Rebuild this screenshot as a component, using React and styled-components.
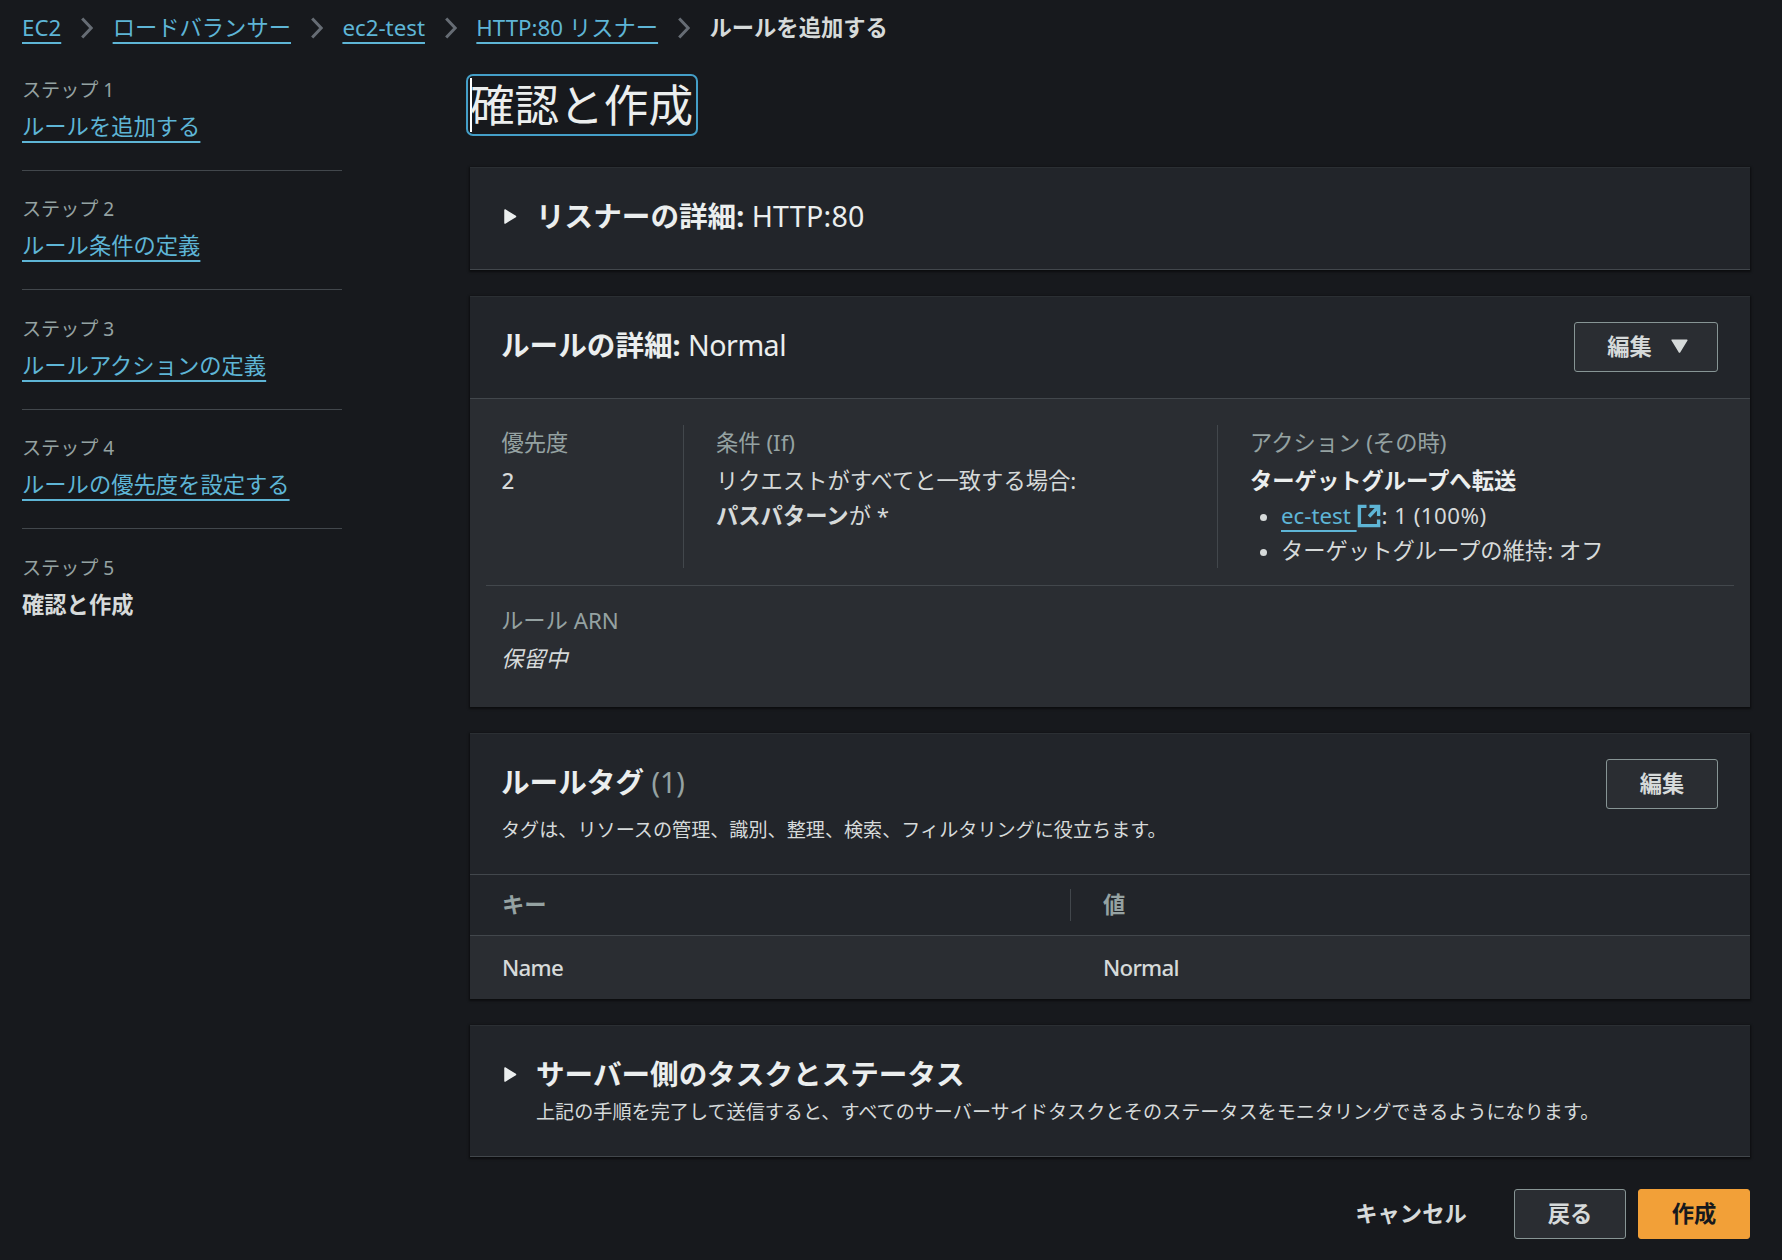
import React from "react";
import styled, { createGlobalStyle, css } from "styled-components";

const color = {
  page: "#17191d",
  header: "#22252a",
  body: "#2a2d32",
  line: "#42474c",
  panelTop: "#2b2f33",
  text: "#d6dada",
  heading: "#ebeeee",
  muted: "#95a2a2",
  link: "#5eb5d6",
  chevron: "#666c74",
  buttonLine: "#879595",
  primary: "#f2a038",
};

const GlobalStyle = createGlobalStyle`
  * { box-sizing: border-box; }
  body {
    margin: 0;
    background: ${color.page};
    color: ${color.text};
    font-family: "Noto Sans", "Noto Sans CJK JP", sans-serif;
    font-size: 22.3px;
    line-height: 35px;
  }
`;

const Page = styled.div`
  height: 1260px;
  overflow: hidden;
  padding: 10px 32px 0 22px;
`;

const Breadcrumbs = styled.nav`
  display: flex;
  align-items: center;
  height: 35px;
  white-space: nowrap;
`;

const Link = styled.a`
  color: ${color.link};
  text-decoration: underline;
  text-decoration-thickness: 2px;
  text-decoration-skip-ink: none;
  text-underline-offset: 6px;
  cursor: pointer;
`;

const Chevron = styled.svg`
  width: 12px;
  height: 22px;
  margin: 0 19.7px;
  flex: none;
`;

const Current = styled.strong`
  font-weight: 700;
  color: ${(p) => (p.$bright ? color.heading : "inherit")};
`;

const Columns = styled.div`
  display: grid;
  grid-template-columns: 320px 1280px;
  column-gap: 128px;
`;

const Steps = styled.ol`
  list-style: none;
  margin: 0;
  padding: 32px 0 0;
`;

const Step = styled.li`
  padding-bottom: 26px;
  & + & {
    border-top: 1px solid ${color.line};
    padding-top: 25.4px;
  }
`;

const StepLabel = styled.div`
  font-size: 19.1px;
  line-height: 27px;
  margin-bottom: 5px;
  color: ${color.muted};
`;

const Main = styled.main`
  display: flex;
  flex-direction: column;
  padding-top: 29px;
`;

const Title = styled.h1`
  align-self: flex-start;
  margin: 0 0 31px -4px;
  height: 62px;
  padding: 2px;
  border: 2px solid #449fc8;
  border-radius: 7px;
  font-size: 44.6px;
  font-weight: 400;
  line-height: 54px;
  color: ${color.heading};
`;

const TitleText = styled.span`
  display: block;
  height: 54px;
  padding-right: 1px;
  box-shadow: inset 2px 0 0 #fff;
`;

const Panel = styled.section`
  height: ${(p) => p.$height}px;
  margin-bottom: 26px;
  border-top: 1px solid ${color.panelTop};
  background: ${(p) => (p.$collapsed ? color.header : color.body)};
  box-shadow: 0 1px 2px 1px rgba(0, 0, 0, 0.5);
  ${(p) => p.$collapsed && css`border-bottom: 1px solid ${color.line};`}
`;

const Heading = styled.h2`
  margin: 0;
  font-size: 28.6px;
  line-height: 44px;
  font-weight: 700;
  color: ${color.heading};
  white-space: nowrap;
`;

const PanelHeader = styled.header`
  display: flex;
  justify-content: space-between;
  align-items: flex-start;
  height: ${(p) => p.$height}px;
  padding: 25px 32px 0 31px;
  background: ${color.header};
  border-bottom: 1px solid ${color.line};
  ${Heading} {
    padding-top: 1px;
  }
`;

const Light = styled.span`
  font-weight: 400;
  color: ${(p) => (p.$muted ? color.muted : "inherit")};
  letter-spacing: ${(p) => p.$tracking || 0}px;
`;

const Description = styled.p`
  margin: ${(p) => p.$gap || 0}px 0 0;
  font-size: 19.12px;
  line-height: 32px;
  white-space: nowrap;
`;

const Toggle = styled.div`
  display: flex;
  padding: 26px 32px 0 34px;
`;

const Arrow = styled.svg`
  flex: none;
  width: 13px;
  height: 17px;
  margin: 14px 19px 0 0;
`;

const Button = styled.button`
  display: flex;
  align-items: center;
  justify-content: center;
  gap: 19px;
  flex: none;
  width: ${(p) => p.$width || 112}px;
  height: 50px;
  padding: 0 0 2px ${(p) => (p.$menu ? 3 : 0)}px;
  border: 1px solid ${color.buttonLine};
  border-radius: 3px;
  background: ${color.body};
  color: ${color.text};
  font: inherit;
  font-weight: 700;
  ${(p) =>
    p.$kind === "primary" &&
    css`
      background: ${color.primary};
      border-color: ${color.primary};
      color: #17191d;
    `}
  ${(p) =>
    p.$kind === "plain" &&
    css`
      background: transparent;
      border-color: transparent;
    `}
`;

const RuleGrid = styled.div`
  display: grid;
  grid-template-columns: 198px 534px 1fr;
  height: 161px;
  margin: 26px 16px 0;
  padding-bottom: 17px;
  border-bottom: 1px solid ${color.line};
`;

const RuleCell = styled.div`
  padding-left: ${(p) => p.$indent || 32}px;
  border-right: ${(p) => (p.$last ? "none" : `1px solid ${color.line}`)};
  white-space: nowrap;
`;

const Label = styled.div`
  color: ${color.muted};
  margin-bottom: 3px;
`;

const Value = styled.div`
  font-weight: ${(p) => (p.$latin ? 500 : 400)};
`;

const Bullets = styled.ul`
  margin: 0;
  padding: 0;
  list-style: none;
`;

const Bullet = styled.li`
  display: flex;
  align-items: center;
  height: 35px;
  &::before {
    content: "";
    width: 7px;
    height: 7px;
    margin: 3px 14px 0 10px;
    border-radius: 50%;
    background: ${color.text};
  }
`;

const ExternalIcon = styled.svg`
  width: 24px;
  height: 24px;
  margin-right: 1px;
`;

const Weight = styled.span`
  letter-spacing: 0.45px;
`;

const Arn = styled.div`
  padding: 17px 31px 0;
`;

const TableRow = styled.div`
  display: grid;
  grid-template-columns: 601px 1fr;
  align-items: center;
  height: ${(p) => (p.$head ? 61 : 63)}px;
  letter-spacing: -0.75px;
  font-weight: 500;
  ${(p) =>
    p.$head &&
    css`
      background: ${color.header};
      border-bottom: 1px solid ${color.line};
      color: ${color.muted};
      font-weight: 700;
      letter-spacing: 0;
    `}
`;

const TableCell = styled.div`
  padding-left: 32px;
  line-height: 32px;
  border-right: ${(p) => (p.$divided ? `1px solid ${color.line}` : "none")};
`;

const Actions = styled.footer`
  display: flex;
  justify-content: flex-end;
  gap: 12px;
  margin-top: 6px;
`;

const crumbs = ["EC2", "ロードバランサー", "ec2-test", "HTTP:80 リスナー"];
const steps = [
  "ルールを追加する",
  "ルール条件の定義",
  "ルールアクションの定義",
  "ルールの優先度を設定する",
  "確認と作成",
];

const Separator = () => (
  <Chevron viewBox="0 0 12 22" fill="none" stroke={color.chevron} strokeWidth="3">
    <path d="M1.2 1.5 10.2 11 1.2 20.5" />
  </Chevron>
);

const Caret = () => (
  <Arrow viewBox="0 0 13 17">
    <path
      d="M1 2 11.5 8.5 1 15Z"
      fill={color.heading}
      stroke={color.heading}
      strokeWidth="1.5"
      strokeLinejoin="round"
    />
  </Arrow>
);

export default function App() {
  return (
    <Page>
      <GlobalStyle />
      <Breadcrumbs>
        {crumbs.map((name) => (
          <React.Fragment key={name}>
            <Link>{name}</Link>
            <Separator />
          </React.Fragment>
        ))}
        <Current>ルールを追加する</Current>
      </Breadcrumbs>
      <Columns>
        <Steps>
          {steps.map((name, i) => (
            <Step key={name}>
              <StepLabel>ステップ {i + 1}</StepLabel>
              {i < steps.length - 1 ? <Link>{name}</Link> : <Current>{name}</Current>}
            </Step>
          ))}
        </Steps>
        <Main>
          <Title><TitleText>確認と作成</TitleText></Title>

          <Panel $height={103} $collapsed>
            <Toggle>
              <Caret />
              <Heading>リスナーの詳細: <Light $tracking={0.25}>HTTP:80</Light></Heading>
            </Toggle>
          </Panel>

          <Panel $height={411}>
            <PanelHeader $height={102}>
              <Heading>ルールの詳細: <Light $tracking={-0.5}>Normal</Light></Heading>
              <Button $width={144} $menu>
                編集
                <svg width="17" height="14" viewBox="0 0 17 14">
                  <path
                    d="M1.2 1.2H15.8L8.5 13Z"
                    fill={color.text}
                    stroke={color.text}
                    strokeWidth="1.6"
                    strokeLinejoin="round"
                  />
                </svg>
              </Button>
            </PanelHeader>
            <RuleGrid>
              <RuleCell $indent={15.5}>
                <Label>優先度</Label>
                <Value $latin>2</Value>
              </RuleCell>
              <RuleCell>
                <Label>条件 (If)</Label>
                <Value>リクエストがすべてと一致する場合:</Value>
                <Value><Current>パスパターン</Current>が *</Value>
              </RuleCell>
              <RuleCell $last>
                <Label>アクション (その時)</Label>
                <Current $bright>ターゲットグループへ転送</Current>
                <Bullets>
                  <Bullet>
                    <Link>ec-test&nbsp;</Link>
                    <ExternalIcon viewBox="0 0 24 24" fill="none" stroke={color.link} strokeWidth="3.4">
                      <path d="M9.5 2.4H2.4V21.6H21.6V15.5" />
                      <path d="M12.5 2.4H21.6V12M21 3 12 12.5" />
                    </ExternalIcon>
                    <Weight>: 1 (100%)</Weight>
                  </Bullet>
                  <Bullet>ターゲットグループの維持: オフ</Bullet>
                </Bullets>
              </RuleCell>
            </RuleGrid>
            <Arn>
              <Label>ルール ARN</Label>
              <em>保留中</em>
            </Arn>
          </Panel>

          <Panel $height={266}>
            <PanelHeader $height={141}>
              <div>
                <Heading>ルールタグ <Light $muted>(1)</Light></Heading>
                <Description $gap={9.5}>
                  タグは、リソースの管理、識別、整理、検索、フィルタリングに役立ちます。
                </Description>
              </div>
              <Button>編集</Button>
            </PanelHeader>
            <TableRow $head>
              <TableCell $divided>キー</TableCell>
              <TableCell>値</TableCell>
            </TableRow>
            <TableRow>
              <TableCell>Name</TableCell>
              <TableCell>Normal</TableCell>
            </TableRow>
          </Panel>

          <Panel $height={132} $collapsed>
            <Toggle>
              <Caret />
              <div>
                <Heading>サーバー側のタスクとステータス</Heading>
                <Description>
                  上記の手順を完了して送信すると、すべてのサーバーサイドタスクとそのステータスをモニタリングできるようになります。
                </Description>
              </div>
            </Toggle>
          </Panel>

          <Actions>
            <Button $kind="plain" $width={182}>キャンセル</Button>
            <Button>戻る</Button>
            <Button $kind="primary">作成</Button>
          </Actions>
        </Main>
      </Columns>
    </Page>
  );
}
